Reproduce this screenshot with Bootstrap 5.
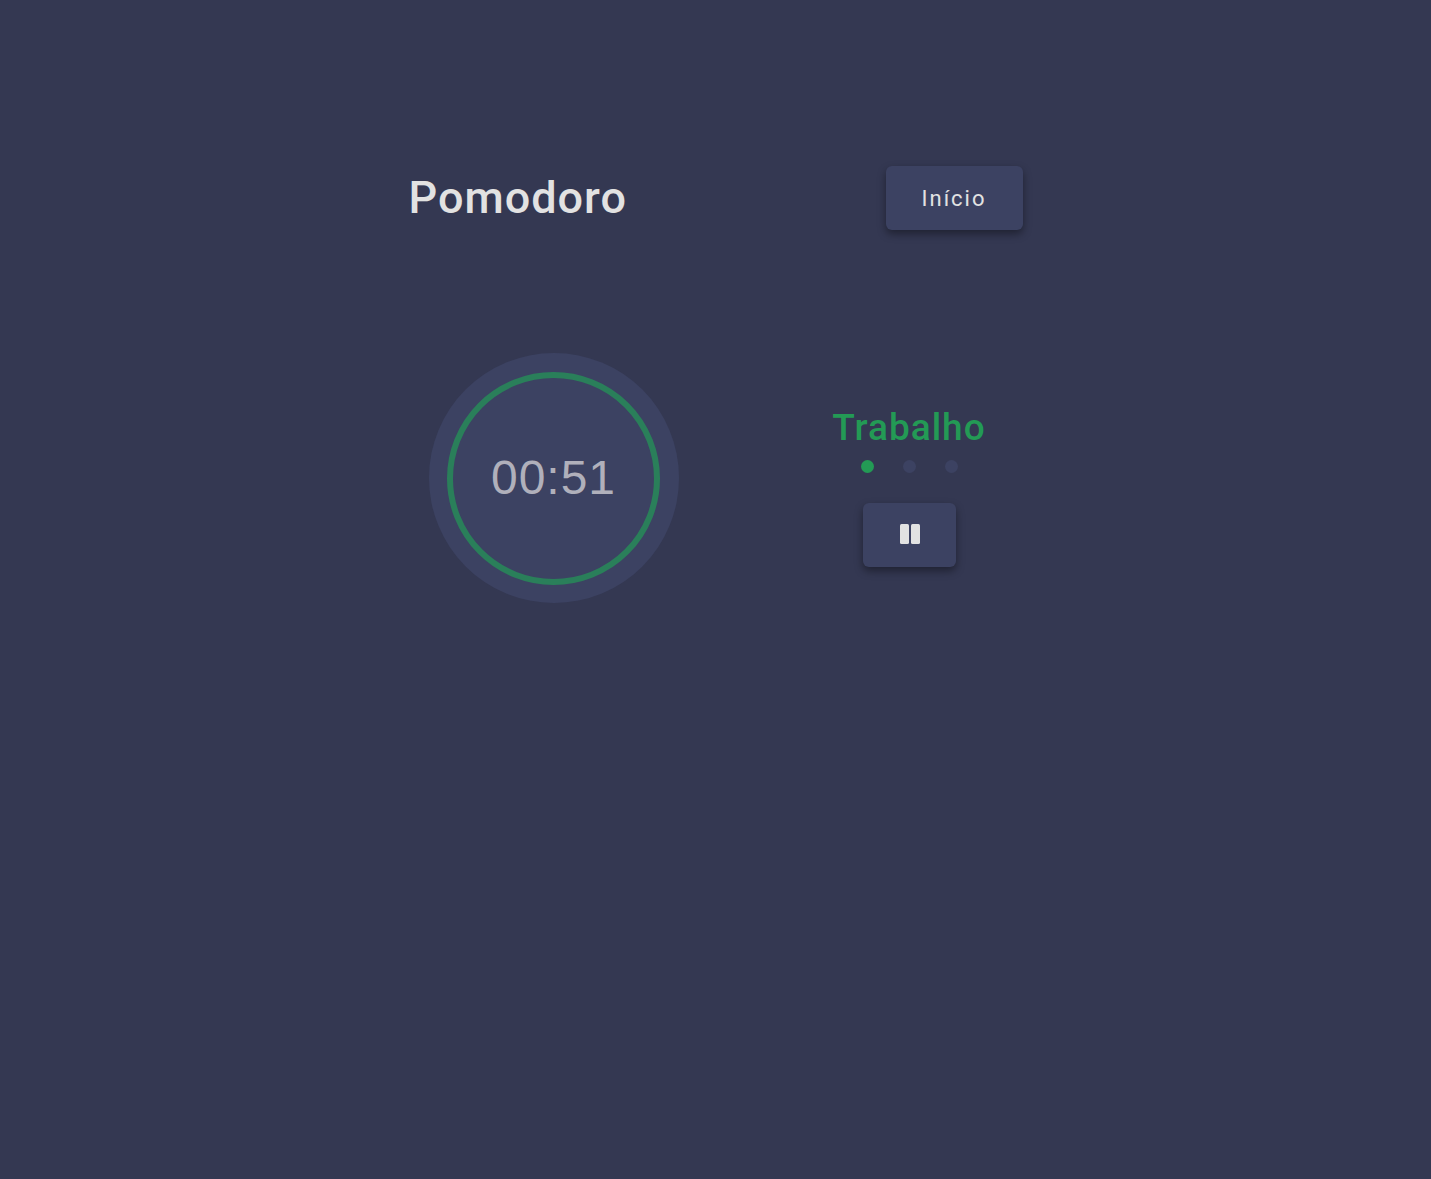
<!DOCTYPE html>
<html lang="pt-BR">
<head>
<meta charset="utf-8">
<meta name="viewport" content="width=device-width, initial-scale=1">
<title>Pomodoro</title>
<link href="https://cdn.jsdelivr.net/npm/bootstrap@5.3.0/dist/css/bootstrap.min.css" rel="stylesheet">
<style>
  body { background: #343852; color: #e2e2e2; font-family: Roboto, sans-serif; }
  .pomodoro { max-width: 614px; padding-top: 166px; }
  .app-title { font-size: 45px; line-height: 64px; font-weight: 500; letter-spacing: 1px; }
  .control {
    --bs-btn-color: #e2e2e2; --bs-btn-bg: #3c4262; --bs-btn-hover-color: #fff; --bs-btn-hover-bg: #474d70;
    --bs-btn-border-width: 0; --bs-btn-border-radius: 6px; --bs-btn-padding-x: 36px; --bs-btn-padding-y: 0;
    --bs-btn-font-size: 22px;
    height: 64px; letter-spacing: 2px; box-shadow: 0 4px 8px rgba(0, 0, 0, .4);
  }
  .session { margin-top: 123px; padding: 0 20px; }
  .dial { width: 250px; height: 250px; background: #3c4262; }
  .ring { width: 213px; height: 213px; border: 6px solid #2a7f5a; }
  .clock { font: 48px/56px "Liberation Sans", sans-serif; letter-spacing: 1px; color: #b0b0bb; }
  .phase { width: 187px; padding-top: 16px; }
  .phase-name { font-size: 37px; line-height: 44px; font-weight: 500; letter-spacing: 1px; color: #239a55; }
  .rounds { gap: 29px; margin: 10px 0 30px; }
  .dot { width: 13px; height: 13px; background: #3c4262; }
  .dot-active { background: #239a55; }
</style>
<script src="https://cdn.jsdelivr.net/npm/bootstrap@5.3.0/dist/js/bootstrap.bundle.min.js" defer></script>
</head>
<body>
<div class="pomodoro mx-auto">
  <header class="d-flex flex-wrap justify-content-between align-items-center">
    <h1 class="app-title mb-0">Pomodoro</h1>
    <button type="button" class="btn control">Início</button>
  </header>
  <main class="session d-flex flex-wrap justify-content-between align-items-center">
    <div class="dial rounded-circle d-flex align-items-center justify-content-center">
      <div class="ring rounded-circle d-flex align-items-center justify-content-center">
        <time class="clock">00:51</time>
      </div>
    </div>
    <section class="phase d-flex flex-column align-items-center">
      <h2 class="phase-name mb-0">Trabalho</h2>
      <div class="rounds d-flex">
        <span class="dot dot-active rounded-circle"></span>
        <span class="dot rounded-circle"></span>
        <span class="dot rounded-circle"></span>
      </div>
      <button type="button" class="btn control d-flex align-items-center" aria-label="Pausar">
        <svg width="21" height="22" viewBox="0 0 21 22" fill="currentColor" aria-hidden="true">
          <rect x="1" width="9" height="20" rx="1.5"/><rect x="12" width="9" height="20" rx="1.5"/>
        </svg>
      </button>
    </section>
  </main>
</div>
</body>
</html>
